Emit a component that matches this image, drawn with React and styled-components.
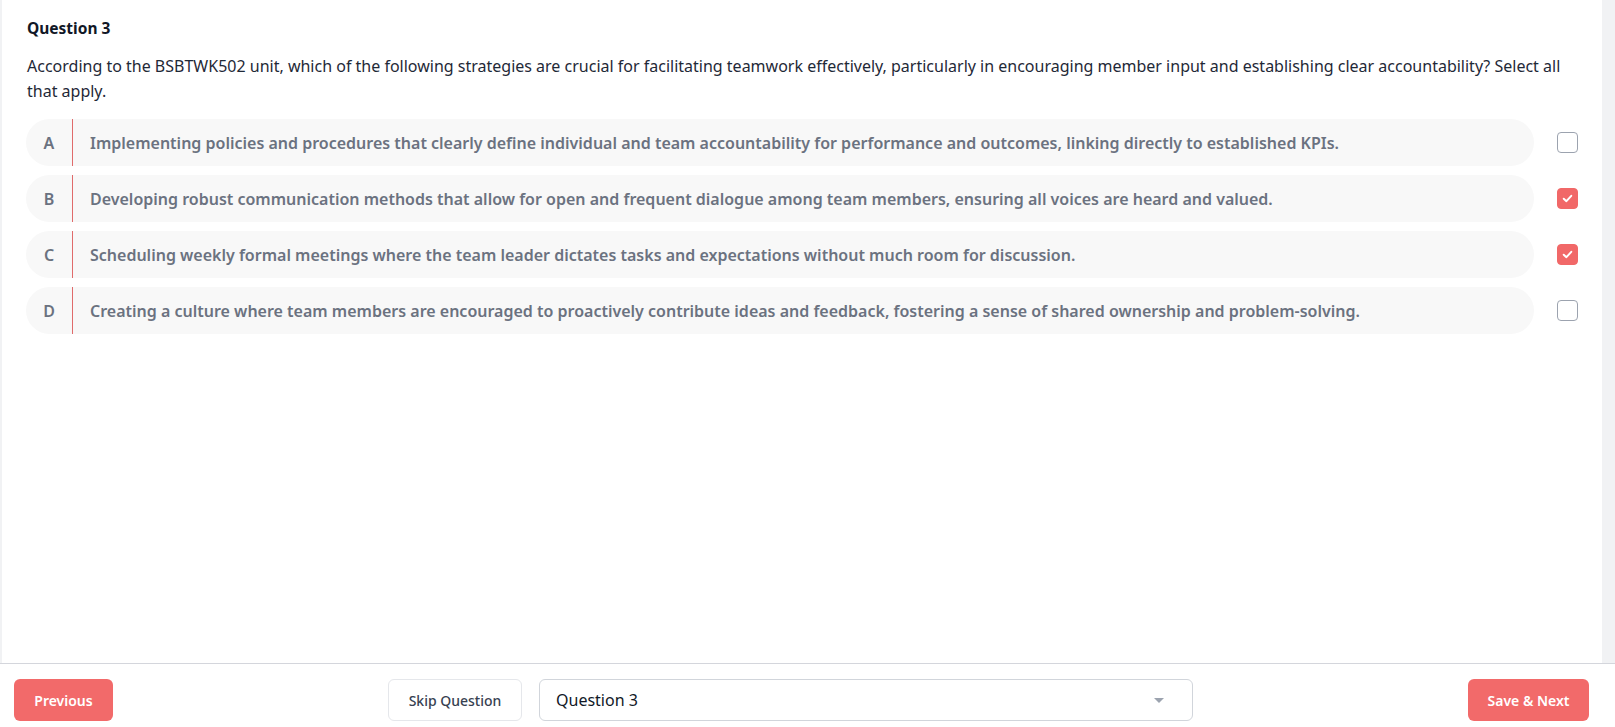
import React, { useState } from 'react';
import styled, { createGlobalStyle } from 'styled-components';

const GlobalStyle = createGlobalStyle`
  html, body {
    margin: 0;
    padding: 0;
    background: #ffffff;
    font-family: "Noto Sans", "Open Sans", sans-serif;
  }
  * { box-sizing: border-box; }
`;

const Page = styled.div`
  width: 1615px;
  height: 727px;
  display: flex;
  flex-direction: column;
  overflow: hidden;
`;

const Body = styled.div`
  height: 663px;
  background: #f1f2f4;
  padding: 0 13px 0 2px;
  display: flex;
`;

const Panel = styled.main`
  flex: 1;
  background: #ffffff;
  padding: 18px 24px 0 24px;
`;

const Title = styled.h2`
  margin: 0 0 0 1px;
  font-size: 15.5px;
  line-height: 20px;
  font-weight: 700;
  color: #111827;
`;

const QuestionText = styled.p`
  margin: 16px 0 16px 1px;
  font-size: 16px;
  line-height: 24.5px;
  color: #1f2937;
`;

const OptionList = styled.div`
  display: flex;
  flex-direction: column;
  gap: 9px;
`;

const OptionRow = styled.div`
  display: flex;
  align-items: center;
  gap: 23px;
  cursor: pointer;
`;

const Pill = styled.div`
  flex: 1;
  height: 47px;
  display: flex;
  align-items: stretch;
  background: #f8f8f8;
  border-radius: 24px;
`;

const Letter = styled.span`
  width: 47px;
  display: flex;
  align-items: center;
  justify-content: center;
  border-right: 1px solid #e06b6b;
  font-size: 16px;
  font-weight: 600;
  color: #6b7280;
`;

const OptionText = styled.span`
  display: flex;
  align-items: center;
  padding-left: 17px;
  font-size: 16px;
  font-weight: 600;
  color: #6b7280;
`;

const Check = styled.span`
  width: 21px;
  height: 21px;
  border-radius: 4px;
  flex-shrink: 0;
  display: flex;
  align-items: center;
  justify-content: center;
  background: ${p => (p.$checked ? '#f16868' : '#ffffff')};
  border: 1.5px solid ${p => (p.$checked ? '#f16868' : '#9ca3af')};
`;

const Footer = styled.footer`
  flex: 1;
  border-top: 1px solid #d4d6dc;
  display: flex;
  align-items: center;
  justify-content: space-between;
  padding: 9px 26px 0 14px;
`;

const PrimaryButton = styled.button`
  height: 42px;
  padding: 0;
  width: ${p => p.$width}px;
  border: none;
  border-radius: 6px;
  background: #f26a6a;
  color: #ffffff;
  font-family: inherit;
  font-size: 14px;
  font-weight: 600;
  white-space: nowrap;
  cursor: pointer;
`;

const MiddleGroup = styled.div`
  display: flex;
  gap: 17px;
  align-items: center;
`;

const SkipButton = styled.button`
  height: 42px;
  width: 134px;
  border: 1px solid #e5e7eb;
  border-radius: 6px;
  background: #ffffff;
  color: #374151;
  font-family: inherit;
  font-size: 14px;
  font-weight: 500;
  cursor: pointer;
`;

const Select = styled.div`
  width: 654px;
  height: 42px;
  border: 1px solid #d1d5db;
  border-radius: 6px;
  display: flex;
  align-items: center;
  justify-content: space-between;
  padding: 0 16px;
  font-size: 16px;
  color: #111827;
`;

const Caret = styled.span`
  width: 0;
  height: 0;
  margin-right: 12px;
  border-left: 5px solid transparent;
  border-right: 5px solid transparent;
  border-top: 5px solid #9ca3af;
`;

const options = [
  { key: 'A', text: 'Implementing policies and procedures that clearly define individual and team accountability for performance and outcomes, linking directly to established KPIs.' },
  { key: 'B', text: 'Developing robust communication methods that allow for open and frequent dialogue among team members, ensuring all voices are heard and valued.' },
  { key: 'C', text: 'Scheduling weekly formal meetings where the team leader dictates tasks and expectations without much room for discussion.' },
  { key: 'D', text: 'Creating a culture where team members are encouraged to proactively contribute ideas and feedback, fostering a sense of shared ownership and problem-solving.' },
];

const CheckMark = () => (
  <svg width="13" height="13" viewBox="0 0 12 12">
    <path d="M2.5 6.2 L5 8.5 L9.5 3.5" fill="none" stroke="#ffffff" strokeWidth="1.8" strokeLinecap="round" strokeLinejoin="round" />
  </svg>
);

const App = () => {
  const [selected, setSelected] = useState(['B', 'C']);

  const toggle = key => {
    setSelected(s => (s.includes(key) ? s.filter(k => k !== key) : [...s, key]));
  };

  return (
    <Page>
      <GlobalStyle />
      <Body>
        <Panel>
          <Title>Question 3</Title>
          <QuestionText>
            According to the BSBTWK502 unit, which of the following strategies are crucial for facilitating teamwork effectively, particularly in encouraging member input and establishing clear accountability? Select all that apply.
          </QuestionText>
          <OptionList>
            {options.map(opt => {
              const checked = selected.includes(opt.key);
              return (
                <OptionRow key={opt.key} onClick={() => toggle(opt.key)}>
                  <Pill>
                    <Letter>{opt.key}</Letter>
                    <OptionText>{opt.text}</OptionText>
                  </Pill>
                  <Check $checked={checked}>{checked && <CheckMark />}</Check>
                </OptionRow>
              );
            })}
          </OptionList>
        </Panel>
      </Body>
      <Footer>
        <PrimaryButton $width={99}>Previous</PrimaryButton>
        <MiddleGroup>
          <SkipButton>Skip Question</SkipButton>
          <Select>
            <span>Question 3</span>
            <Caret />
          </Select>
        </MiddleGroup>
        <PrimaryButton $width={121}>Save &amp; Next</PrimaryButton>
      </Footer>
    </Page>
  );
};

export default App;
